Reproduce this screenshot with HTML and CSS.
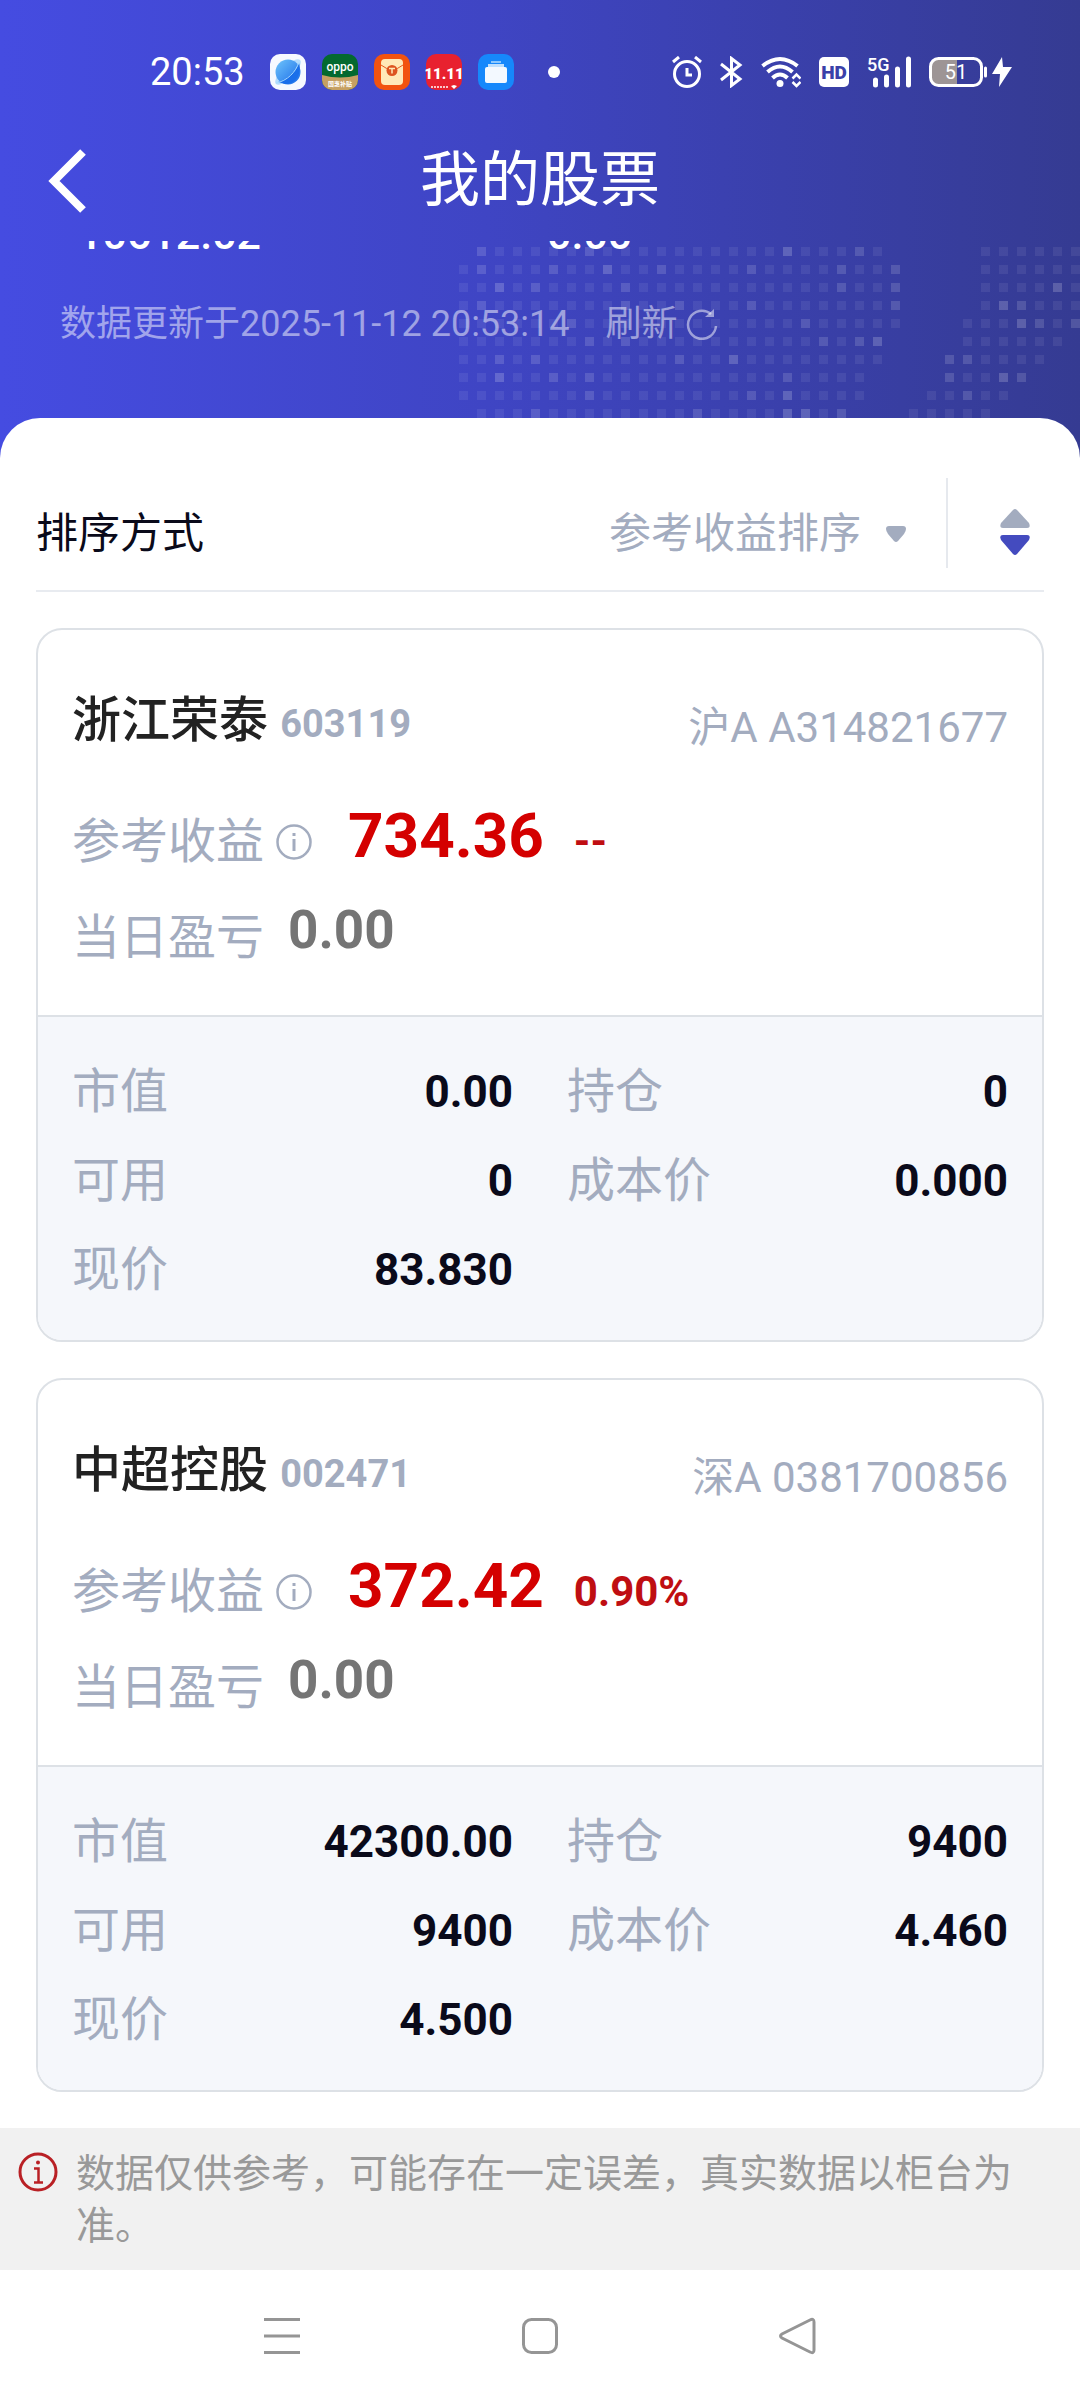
FILE: index.html
```html
<!DOCTYPE html>
<html lang="zh-CN">
<head>
    <meta charset="utf-8">
    <meta name="viewport" content="width=device-width, initial-scale=1">
    <title>我的股票</title>
    <link rel="stylesheet" href="styles.css">
</head>
<body>
<header class="header">
    <svg class="header-dots" width="621" height="171" viewBox="0 0 621 171" aria-hidden="true">
        <path class="dots-base" d="M18 4.5h414M522 4.5h108M0 22.5h450M522 22.5h108M0 40.5h450M522 40.5h108M0 58.5h450M522 58.5h108M0 76.5h450M504 76.5h126M0 94.5h432M504 94.5h108M0 112.5h432M486 112.5h108M0 130.5h414M486 130.5h90M0 148.5h414M468 148.5h90M18 166.5h378M450 166.5h90"/>
        <path class="dots-mid" d="M18 4.5h9M126 4.5h9M396 4.5h9M18 22.5h9M90 22.5h9M198 22.5h9M288 22.5h9M378 22.5h9M432 22.5h9M72 40.5h9M162 40.5h9M378 40.5h9M432 40.5h9M18 58.5h9M162 58.5h9M216 58.5h9M288 58.5h9M432 58.5h9M558 58.5h9M108 76.5h9M342 76.5h9M576 76.5h9M612 76.5h9M126 94.5h9M162 94.5h9M360 94.5h9M396 94.5h9M36 112.5h9M72 112.5h9M216 112.5h9M486 112.5h9M504 112.5h9M90 130.5h9M126 130.5h9M324 130.5h9M486 130.5h9M558 130.5h9M126 148.5h9M288 148.5h9M504 148.5h9M72 166.5h9M234 166.5h9M378 166.5h9"/>
        <path class="dots-bright" d="M324 4.5h9M144 22.5h9M36 40.5h9M594 40.5h9M540 58.5h9M558 76.5h9M414 94.5h9M270 112.5h9M36 130.5h9M540 130.5h9M324 148.5h9M324 166.5h9M342 166.5h9"/>
    </svg>

    <div class="status-bar">
        <div class="status-left">
            <span class="clock">20:53</span>
            <svg class="app" viewBox="0 0 36 36" aria-hidden="true">
                <defs>
                    <linearGradient id="planet" x1="0" y1="0" x2="1" y2="1">
                        <stop offset="0" stop-color="#6fc4fb"/>
                        <stop offset="1" stop-color="#1769e8"/>
                    </linearGradient>
                </defs>
                <rect width="36" height="36" rx="10" fill="#f6f9ff"/>
                <ellipse cx="18" cy="18" rx="17" ry="6" transform="rotate(-45 18 18)" fill="#b5dcfd"/>
                <circle cx="18" cy="18" r="12.500" fill="url(#planet)"/>
                <path d="M8 28C18 25 26 17 29 9C32 19 26 31 15 30Z" fill="#1a6fea"/>
                <path d="M6 29C17 27 26 18 29 8" fill="none" stroke="#a9dcff" stroke-width="1"/>
            </svg>
            <svg class="app" viewBox="0 0 36 36" aria-hidden="true">
                <rect width="36" height="36" rx="10" fill="#04692f"/>
                <path d="M0 21Q18 26 36 21V26A10 10 0 0 1 26 36H10A10 10 0 0 1 0 26Z" fill="#c6a062"/>
                <text x="18" y="17" class="app-brand">oppo</text>
                <text x="18" y="32" class="app-note">国惠补贴</text>
            </svg>
            <svg class="app" viewBox="0 0 36 36" aria-hidden="true">
                <rect width="36" height="36" rx="10" fill="#f2530f"/>
                <rect x="7" y="5" width="22" height="26" rx="4" fill="#ffe9b8"/>
                <path d="M7 11Q18 20 29 11" fill="none" stroke="#e5581c" stroke-width="1"/>
                <circle cx="18" cy="16.500" r="5.500" fill="#dd5420"/>
                <path d="M15 14.500h6M18 14.500v5" stroke="#ffe9b8" stroke-width="1.500"/>
            </svg>
            <svg class="app" viewBox="0 0 36 36" aria-hidden="true">
                <rect width="36" height="36" rx="10" fill="#e8212f"/>
                <text x="18" y="25" class="app-sale">11.11</text>
                <path d="M5 33h18" stroke="#ffffff" stroke-width="1.500" stroke-dasharray="2 1"/>
                <path d="M25 32l3-1l3 1l-3 3z" fill="#ffffff"/>
            </svg>
            <svg class="app" viewBox="0 0 36 36" aria-hidden="true">
                <rect width="36" height="36" rx="10" fill="#1688fb"/>
                <path d="M13 7h10v2H13z" fill="#8cc8fd"/>
                <path d="M10 10h16v3H10z" fill="#bfe0fe"/>
                <rect x="7" y="13" width="22" height="16" rx="2" fill="#f3f9ff"/>
            </svg>
            <span class="more-dot"></span>
        </div>
        <div class="status-right">
            <svg width="30" height="32" viewBox="0 0 30 32" class="line-icon" aria-hidden="true">
                <circle cx="15" cy="18" r="12.500"/>
                <path d="M15 12v7h5M1 6l6-5M29 6l-6-5"/>
            </svg>
            <svg width="23" height="32" viewBox="0 0 23 32" class="line-icon" aria-hidden="true">
                <path d="M1 8L20 23L11.500 29.500V2.500L20 9L1 24"/>
            </svg>
            <svg width="40" height="32" viewBox="0 0 40 32" aria-hidden="true">
                <g fill="none" stroke="#ffffff" stroke-width="4">
                    <path d="M1.500 10Q19 -4 36.500 10"/>
                    <path d="M6.500 16Q19 5 31.500 16"/>
                    <path d="M11.500 22Q19 15 26.500 22"/>
                </g>
                <circle cx="19" cy="27.500" r="3.500" fill="#ffffff"/>
                <path d="M31.500 22.500L35.500 18.500L39.500 22.500M31.500 26L35.500 30L39.500 26" fill="none" stroke="#ffffff" stroke-width="2.500"/>
            </svg>
            <svg width="30" height="30" viewBox="0 0 30 30" aria-hidden="true">
                <rect width="30" height="30" rx="5" fill="#ffffff"/>
                <text x="15" y="22" class="hd-text">HD</text>
            </svg>
            <svg class="network" width="44" height="32" viewBox="0 0 44 32" aria-hidden="true">
                <text x="0" y="15" class="net-text">5G</text>
                <path d="M8.500 24v5M19.500 21v8M30.500 13v16M41.500 3v26" stroke="#ffffff" stroke-width="5" stroke-linecap="round"/>
            </svg>
            <svg width="83" height="32" viewBox="0 0 83 32" aria-hidden="true">
                <path d="M10 3h18v26H10a8 8 0 0 1-8-8V11a8 8 0 0 1 8-8z" fill="#9d9595"/>
                <rect x="1.500" y="2.500" width="51" height="27" rx="8" fill="none" stroke="#ffffff" stroke-width="3"/>
                <path d="M56.500 12v8" stroke="#ffffff" stroke-width="3" stroke-linecap="round"/>
                <text x="27" y="23" class="battery-text">51</text>
                <path d="M73 1L63 18h8l-1 13L83 11h-9z" fill="#ffffff"/>
            </svg>
        </div>
    </div>

    <div class="title-bar">
        <button class="icon-button back" type="button" aria-label="返回">
            <svg width="38" height="64" viewBox="0 0 38 64" aria-hidden="true">
                <path d="M35 3L6 32L35 61" fill="none" stroke="#ffffff" stroke-width="8"/>
            </svg>
        </button>
        <h1 class="title">我的股票</h1>
    </div>

    <div class="summary">
        <span>10612.02</span>
        <span>0.00</span>
    </div>

    <div class="update">
        <span>数据更新于2025-11-12 20:53:14</span>
        <button class="refresh" type="button">刷新
            <svg width="32" height="32" viewBox="0 0 32 32" aria-hidden="true">
                <path d="M25 6A14 14 0 1 0 30 18" fill="none" stroke="currentColor" stroke-width="2.500"/>
                <path d="M28 1V9H19z" fill="currentColor"/>
            </svg>
        </button>
    </div>
</header>

<main class="sheet">
    <div class="sort">
        <label class="sort-label" for="sort-by">排序方式</label>
        <div class="sort-pick">
            <select id="sort-by" class="sort-select">
                <option>参考收益排序</option>
            </select>
            <svg width="20" height="16" viewBox="0 0 20 16" aria-hidden="true">
                <path d="M3 0H17Q20 0 20 3Q20 5 18 8L12 15Q10 17 8 15L2 8Q0 5 0 3Q0 0 3 0z" fill="#a3acbf"/>
            </svg>
        </div>
        <button class="icon-button sort-order" type="button" aria-label="切换升降序">
            <svg width="30" height="46" viewBox="0 0 30 46" aria-hidden="true">
                <path d="M13 1Q15 -1 17 1L29 14Q31 19 27 19H3Q-1 19 1 14z" fill="#a3acbf"/>
                <path d="M13 45Q15 47 17 45L29 31Q31 26 27 26H3Q-1 26 1 31z" fill="#444bbf"/>
            </svg>
        </button>
    </div>

    <article class="card">
        <div class="card-top">
            <div class="card-head">
                <h2 class="name">浙江荣泰 <span class="code">603119</span></h2>
                <span class="account">沪A A314821677</span>
            </div>
            <div class="profit">
                <span class="label">参考收益</span>
                <button class="icon-button info" type="button" aria-label="参考收益说明">
                    <svg width="36" height="36" viewBox="0 0 36 36" aria-hidden="true">
                        <circle cx="18" cy="18" r="16.500" fill="none" stroke="#a3acbf" stroke-width="2.500"/>
                        <path d="M18 9v3M18 15v12" stroke="#a3acbf" stroke-width="3"/>
                    </svg>
                </button>
                <span class="profit-value">734.36</span>
                <span class="profit-rate">--</span>
            </div>
            <div class="today">
                <span class="label">当日盈亏</span>
                <span class="today-value">0.00</span>
            </div>
        </div>
        <dl class="stats">
            <div class="stat"><dt>市值</dt><dd>0.00</dd></div>
            <div class="stat"><dt>持仓</dt><dd>0</dd></div>
            <div class="stat"><dt>可用</dt><dd>0</dd></div>
            <div class="stat"><dt>成本价</dt><dd>0.000</dd></div>
            <div class="stat"><dt>现价</dt><dd>83.830</dd></div>
        </dl>
    </article>

    <article class="card">
        <div class="card-top">
            <div class="card-head">
                <h2 class="name">中超控股 <span class="code">002471</span></h2>
                <span class="account">深A 0381700856</span>
            </div>
            <div class="profit">
                <span class="label">参考收益</span>
                <button class="icon-button info" type="button" aria-label="参考收益说明">
                    <svg width="36" height="36" viewBox="0 0 36 36" aria-hidden="true">
                        <circle cx="18" cy="18" r="16.500" fill="none" stroke="#a3acbf" stroke-width="2.500"/>
                        <path d="M18 9v3M18 15v12" stroke="#a3acbf" stroke-width="3"/>
                    </svg>
                </button>
                <span class="profit-value">372.42</span>
                <span class="profit-rate">0.90%</span>
            </div>
            <div class="today">
                <span class="label">当日盈亏</span>
                <span class="today-value">0.00</span>
            </div>
        </div>
        <dl class="stats">
            <div class="stat"><dt>市值</dt><dd>42300.00</dd></div>
            <div class="stat"><dt>持仓</dt><dd>9400</dd></div>
            <div class="stat"><dt>可用</dt><dd>9400</dd></div>
            <div class="stat"><dt>成本价</dt><dd>4.460</dd></div>
            <div class="stat"><dt>现价</dt><dd>4.500</dd></div>
        </dl>
    </article>
</main>

<div class="notice">
    <svg class="notice-icon" width="40" height="40" viewBox="0 0 40 40" aria-hidden="true">
        <circle cx="20" cy="20" r="18" fill="none" stroke="#b92025" stroke-width="3"/>
        <path d="M16 16.500h4.500v14M16 30.500h9" fill="none" stroke="#b92025" stroke-width="2.500"/>
        <circle cx="20" cy="10.500" r="2" fill="#b92025"/>
    </svg>
    <p class="notice-text">数据仅供参考，可能存在一定误差，真实数据以柜台为准。</p>
</div>

<nav class="system-nav">
    <button class="icon-button" type="button" aria-label="最近任务">
        <svg width="38" height="38" viewBox="0 0 38 38" class="nav-icon" aria-hidden="true">
            <path d="M1 2.500h36M1 19h36M1 35.500h36"/>
        </svg>
    </button>
    <button class="icon-button" type="button" aria-label="主屏幕">
        <svg width="38" height="38" viewBox="0 0 38 38" class="nav-icon" aria-hidden="true">
            <rect x="2.500" y="2.500" width="33" height="33" rx="8"/>
        </svg>
    </button>
    <button class="icon-button" type="button" aria-label="返回上一页">
        <svg width="38" height="38" viewBox="0 0 38 38" class="nav-icon" aria-hidden="true">
            <path d="M31 3Q35 1 35 5V33Q35 37 31 35L3 21Q0 19 3 17z"/>
        </svg>
    </button>
</nav>
</body>
</html>
```

FILE: styles.css
```css
* {
    box-sizing: border-box;
}

body {
    margin: 0;
    background: #fff;
    font-family: Roboto, "Noto Sans CJK SC", sans-serif;
    color: #0a0a1a;
}

button,
select {
    border: 0;
    padding: 0;
    background: none;
    font: inherit;
    color: inherit;
}

.icon-button {
    display: flex;
    align-items: center;
    justify-content: center;
}

/* header */

.header {
    position: relative;
    overflow: hidden;
    padding-bottom: 40px;
    background: linear-gradient(90deg, #454ce1 0%, #3f45c4 45%, #353b92 100%);
    color: #fff;
}

.header-dots {
    position: absolute;
    top: 247px;
    right: 0;
    fill: none;
    stroke: #fff;
    stroke-width: 9;
}

.dots-base {
    stroke-dasharray: 9 9;
    stroke-opacity: 0.07;
}

.dots-mid {
    stroke-opacity: 0.08;
}

.dots-bright {
    stroke-opacity: 0.13;
}

.status-bar {
    display: flex;
    align-items: center;
    justify-content: space-between;
    height: 120px;
    padding: 24px 68px 0 150px;
}

.status-left {
    display: flex;
    align-items: center;
    gap: 16px;
}

.status-right {
    display: flex;
    align-items: center;
    gap: 18px;
}

.clock {
    margin-right: 9px;
    font-size: 38px;
    line-height: 40px;
}

.app {
    width: 36px;
    height: 36px;
    overflow: visible;
}

.app-brand {
    fill: #fff;
    font-size: 12px;
    font-weight: 500;
    text-anchor: middle;
}

.app-note {
    fill: #fff;
    font-size: 6px;
    font-weight: 700;
    text-anchor: middle;
}

.app-sale {
    fill: #fff;
    font-size: 15px;
    font-weight: 900;
    text-anchor: middle;
}

.more-dot {
    width: 12px;
    height: 12px;
    margin-left: 18px;
    border-radius: 50%;
    background: #fff;
}

.line-icon {
    fill: none;
    stroke: #fff;
    stroke-width: 3;
}

.hd-text {
    fill: #3a40a8;
    font-size: 19px;
    font-weight: 900;
    text-anchor: middle;
}

.network {
    overflow: visible;
}

.net-text {
    fill: #fff;
    font-size: 18px;
    font-weight: 500;
}

.battery-text {
    fill: #fff;
    font-size: 20px;
    text-anchor: middle;
}

.title-bar {
    display: grid;
    grid-template-columns: 1fr auto 1fr;
    align-items: center;
    height: 121px;
    padding: 0 48px;
}

.back {
    justify-self: start;
}

.title {
    margin: 0;
    font-size: 60px;
    font-weight: 400;
    line-height: 72px;
}

/* totals scrolled halfway under the title bar */
.summary {
    display: grid;
    grid-template-columns: 1fr 1fr;
    align-content: end;
    column-gap: 12px;
    height: 13px;
    padding: 0 76px 0 78px;
    overflow: hidden;
    font-size: 43px;
    font-weight: 500;
    line-height: 40px;
}

.update {
    display: flex;
    align-items: center;
    gap: 36px;
    padding: 46px 60px 70px;
    font-size: 36px;
    line-height: 48px;
    color: rgba(255, 255, 255, 0.5);
}

.refresh {
    display: flex;
    align-items: center;
    gap: 8px;
}

/* sheet */

.sheet {
    position: relative;
    margin-top: -40px;
    padding: 60px 36px 36px;
    border-radius: 40px 40px 0 0;
    background: #fff;
}

.sort {
    display: flex;
    align-items: center;
    height: 114px;
    margin-bottom: 36px;
    border-bottom: 2px solid #e8ebf0;
    font-size: 42px;
    line-height: 56px;
}

.sort-label {
    margin-right: auto;
}

.sort-pick {
    display: flex;
    align-items: center;
    gap: 24px;
}

.sort-select {
    appearance: none;
    color: #a3acbf;
}

.sort-order {
    align-self: flex-start;
    height: 90px;
    margin-left: 40px;
    padding: 18px 14px 0 52px;
    border-left: 2px solid #e6e9ee;
}

/* stock card */

.card {
    overflow: hidden;
    border: 2px solid #dde1e6;
    border-radius: 26px;
}

.card + .card {
    margin-top: 36px;
}

.card-top {
    padding: 56px 34px 41px;
}

.card-head {
    display: flex;
    align-items: center;
    justify-content: space-between;
    height: 72px;
}

.name {
    margin: 0;
    font-size: 49px;
    font-weight: 500;
    line-height: 72px;
    color: #222;
}

.code {
    font-size: 38px;
    font-weight: 700;
    color: #a3acbf;
}

.account {
    padding-top: 12px;
    font-size: 42px;
    line-height: 60px;
    color: #a3acbf;
}

.label {
    font-size: 48px;
    line-height: 72px;
    color: #a3acbf;
}

.profit {
    display: flex;
    align-items: center;
    height: 72px;
    margin-top: 48px;
}

.info {
    margin-left: 12px;
}

.profit-value {
    align-self: flex-start;
    margin-left: 36px;
    font-size: 62px;
    font-weight: 700;
    line-height: 60px;
    color: #d40000;
}

.profit-rate {
    margin-left: 30px;
    font-size: 42px;
    font-weight: 700;
    line-height: 60px;
    color: #bf0e12;
}

.today {
    display: flex;
    align-items: center;
    gap: 24px;
    height: 72px;
    margin-top: 24px;
}

.today-value {
    align-self: flex-start;
    font-size: 53px;
    font-weight: 700;
    line-height: 56px;
    color: #757575;
}

.stats {
    display: grid;
    grid-template-columns: 1fr 1fr;
    column-gap: 54px;
    margin: 0;
    padding: 30px 34px 26px;
    border-top: 2px solid #dde1e6;
    background: #f5f7fb;
}

.stat {
    display: flex;
    align-items: center;
    justify-content: space-between;
    height: 89px;
}

.stat dt {
    font-size: 48px;
    line-height: 72px;
    color: #a3acbf;
}

.stat dd {
    margin: 0;
    font-size: 44px;
    font-weight: 700;
    line-height: 72px;
}

/* bottom */

.notice {
    display: flex;
    align-items: flex-start;
    gap: 18px;
    padding: 20px 36px 18px 18px;
    background: #f1f1f1;
}

.notice-icon {
    flex: none;
    margin-top: 4px;
}

.notice-text {
    margin: 0;
    font-size: 39px;
    line-height: 52px;
    color: #999;
}

.system-nav {
    display: flex;
    align-items: center;
    justify-content: center;
    gap: 220px;
    height: 132px;
}

.nav-icon {
    fill: none;
    stroke: #959595;
    stroke-width: 3;
}
```
